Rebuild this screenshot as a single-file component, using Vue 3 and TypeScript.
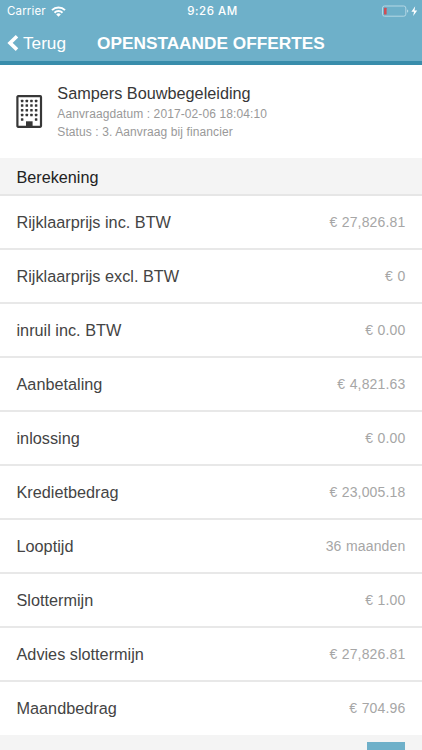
<script setup lang="ts">
interface Row {
  label: string
  value: string
}

const rows: Row[] = [
  { label: 'Rijklaarprijs inc. BTW', value: '€ 27,826.81' },
  { label: 'Rijklaarprijs excl. BTW', value: '€ 0' },
  { label: 'inruil inc. BTW', value: '€ 0.00' },
  { label: 'Aanbetaling', value: '€ 4,821.63' },
  { label: 'inlossing', value: '€ 0.00' },
  { label: 'Kredietbedrag', value: '€ 23,005.18' },
  { label: 'Looptijd', value: '36 maanden' },
  { label: 'Slottermijn', value: '€ 1.00' },
  { label: 'Advies slottermijn', value: '€ 27,826.81' },
  { label: 'Maandbedrag', value: '€ 704.96' },
]

const windows = [0, 1, 2, 3, 4].flatMap((r) =>
  [0, 1, 2, 3]
    .filter((c) => r < 4 || c === 0 || c === 3)
    .map((c) => ({ x: 4.6 + c * 4.65, y: 4.7 + r * 4.65 })),
)
</script>

<template>
  <div class="screen">
    <header class="header">
      <div class="status">
        <div class="carrier">
          <span>Carrier</span>
          <svg class="wifi" width="15" height="11" viewBox="0 0 15 11" fill="none" stroke="#fff" stroke-width="2">
            <path d="M1 4.1a9.2 9.2 0 0 1 13 0" />
            <path d="M3.5 6.7a5.7 5.7 0 0 1 8 0" />
            <path d="M7.5 10.7 5.2 8.4a3.3 3.3 0 0 1 4.6 0Z" fill="#fff" stroke="none" />
          </svg>
        </div>
        <span class="time">9:26 AM</span>
        <div class="power">
          <svg width="36" height="13" viewBox="0 0 36 13">
            <rect x="0.5" y="1" width="23.3" height="10.2" rx="2" fill="none" stroke="#b4d8e5" />
            <rect x="2" y="2.7" width="2.6" height="6.8" rx="0.5" fill="#cf4d55" />
            <path d="M25 4.4q1.3.4 1.3 1.7T25 7.8Z" fill="#b4d8e5" />
            <path d="M33.2 1.3 29.4 6.8H32l-.8 4.3L35.2 5.4h-2.7Z" fill="#fff" />
          </svg>
        </div>
      </div>
      <div class="nav">
        <button class="back" type="button">
          <svg width="12" height="18" viewBox="0 0 12 18">
            <path d="M10 2.2 3 8.9l7 6.7" fill="none" stroke="#fff" stroke-width="3.6" />
          </svg>
          <span>Terug</span>
        </button>
        <h1 class="title">OPENSTAANDE OFFERTES</h1>
      </div>
    </header>

    <section class="company">
      <svg class="building" width="27" height="34" viewBox="0 0 27 34">
        <rect x="1.4" y="1.2" width="23.6" height="30.6" rx="0.7" fill="#fff" stroke="#373737" stroke-width="2.2" />
        <rect v-for="(w, i) in windows" :key="i" :x="w.x + 0.3" :y="w.y" width="2.5" height="2.5" rx="0.5" fill="#373737" />
        <path d="M10 26.3h6.6V32H10Z" fill="#373737" />
      </svg>
      <div class="details">
        <h2>Sampers Bouwbegeleiding</h2>
        <p>Aanvraagdatum : 2017-02-06 18:04:10</p>
        <p>Status : 3. Aanvraag bij financier</p>
      </div>
    </section>

    <h3 class="section">Berekening</h3>
    <ul class="rows">
      <li v-for="row in rows" :key="row.label">
        <span class="label">{{ row.label }}</span>
        <span class="value">{{ row.value }}</span>
      </li>
    </ul>
    <footer class="footer"><div class="action"></div></footer>
  </div>
</template>

<style>
body {
  margin: 0;
}
</style>

<style scoped>
.screen {
  width: 422px;
  height: 750px;
  box-sizing: border-box;
  display: flex;
  flex-direction: column;
  overflow: hidden;
  background: #fff;
  font-family: "Liberation Sans", Arial, sans-serif;
}
.header {
  height: 65px;
  flex: none;
  box-sizing: border-box;
  background: #6eb0c9;
  border-bottom: 4px solid #398dab;
  color: #fff;
}
.status {
  height: 22px;
  display: grid;
  grid-template-columns: 1fr auto 1fr;
  align-items: center;
  padding: 0 4px 0 7px;
  font: 11.5px/22px Inter, sans-serif;
}
.carrier {
  display: flex;
  align-items: center;
  gap: 5px;
  letter-spacing: 0.15px;
}
.time {
  font-weight: 500;
  letter-spacing: 0.5px;
}
.power {
  display: flex;
  justify-content: flex-end;
}
.nav {
  height: 41px;
  display: flex;
  align-items: center;
  padding-left: 7px;
}
.back {
  width: 90px;
  display: flex;
  align-items: center;
  gap: 4px;
  padding: 0;
  border: 0;
  background: none;
  color: #fff;
  font: 17.2px/22px "Liberation Sans", Arial, sans-serif;
}
.title {
  margin: 0;
  font-size: 17.25px;
  line-height: 22px;
  white-space: nowrap;
}
.company {
  height: 93px;
  flex: none;
  display: flex;
  align-items: center;
  padding-left: 16px;
  gap: 14.3px;
}
.details {
  padding-top: 1px;
}
.details h2 {
  margin: -1px 0 1px;
  color: #373737;
  font-size: 16.25px;
  font-weight: 400;
  line-height: 22px;
}
.details p {
  margin: 0;
  color: #999;
  font-size: 12px;
  line-height: 18px;
  letter-spacing: 0.1px;
}
.section {
  height: 38px;
  flex: none;
  box-sizing: border-box;
  margin: 0;
  padding-left: 16.5px;
  border-bottom: 2px solid #e6e6e6;
  background: #f4f4f4;
  color: #222;
  font-size: 16.2px;
  font-weight: 400;
  line-height: 38px;
}
.rows {
  margin: 0;
  padding: 0;
  list-style: none;
}
.rows li {
  height: 54px;
  box-sizing: border-box;
  display: flex;
  align-items: center;
  justify-content: space-between;
  padding: 0 17px 0 16.5px;
  border-bottom: 2px solid #e8e8e8;
}
.rows li:last-child {
  height: 53px;
  padding-bottom: 1px;
  border-bottom: 0;
}
.label {
  color: #444;
  font-size: 16.25px;
}
.value {
  color: #a6a6a6;
  font-size: 14px;
  letter-spacing: 0.15px;
  word-spacing: 0.4px;
  margin-right: -0.4px;
}
.footer {
  flex: 1;
  display: flex;
  justify-content: flex-end;
  padding: 7px 17px 0;
  background: #f4f4f4;
}
.action {
  width: 38px;
  background: #6eb0c9;
}
</style>
